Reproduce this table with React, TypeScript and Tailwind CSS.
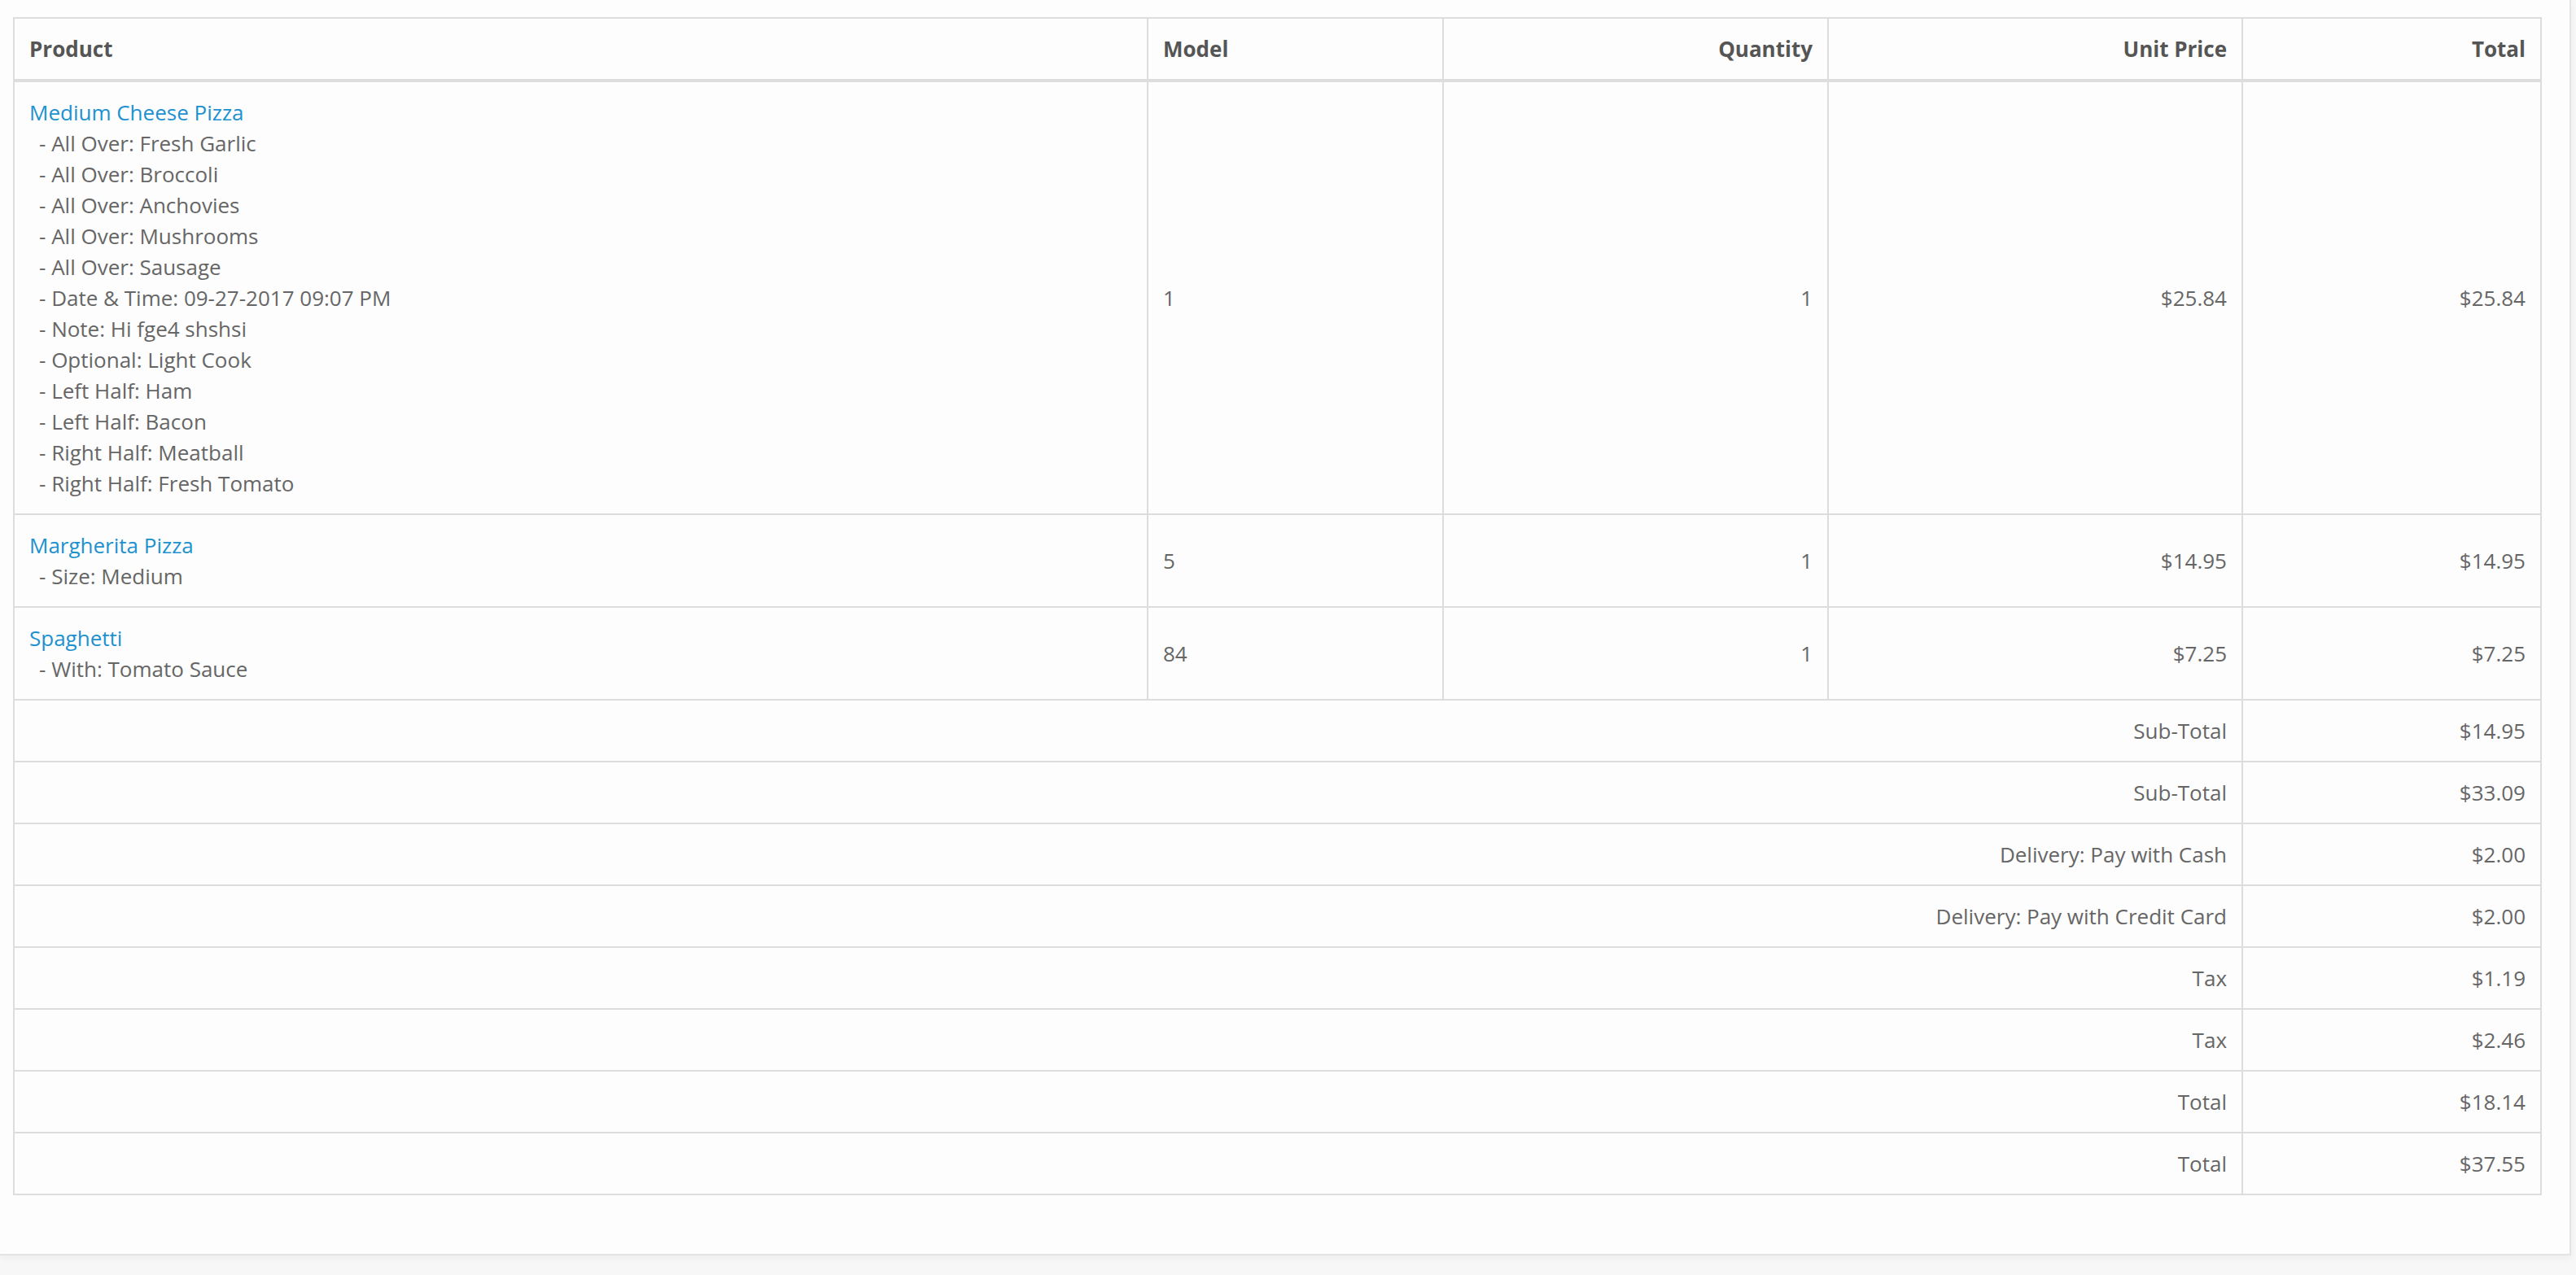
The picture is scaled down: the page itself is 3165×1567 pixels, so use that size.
import React from 'react';

interface OrderLine {
  name: string;
  options: string[];
  model: string;
  quantity: number;
  price: string;
  total: string;
}

const LINES: OrderLine[] = [
  {
    name: 'Medium Cheese Pizza',
    options: [
      'All Over: Fresh Garlic',
      'All Over: Broccoli',
      'All Over: Anchovies',
      'All Over: Mushrooms',
      'All Over: Sausage',
      'Date & Time: 09-27-2017 09:07 PM',
      'Note: Hi fge4 shshsi',
      'Optional: Light Cook',
      'Left Half: Ham',
      'Left Half: Bacon',
      'Right Half: Meatball',
      'Right Half: Fresh Tomato',
    ],
    model: '1',
    quantity: 1,
    price: '$25.84',
    total: '$25.84',
  },
  {
    name: 'Margherita Pizza',
    options: ['Size: Medium'],
    model: '5',
    quantity: 1,
    price: '$14.95',
    total: '$14.95',
  },
  {
    name: 'Spaghetti',
    options: ['With: Tomato Sauce'],
    model: '84',
    quantity: 1,
    price: '$7.25',
    total: '$7.25',
  },
];

const TOTALS: [string, string][] = [
  ['Sub-Total', '$14.95'],
  ['Sub-Total', '$33.09'],
  ['Delivery: Pay with Cash', '$2.00'],
  ['Delivery: Pay with Credit Card', '$2.00'],
  ['Tax', '$1.19'],
  ['Tax', '$2.46'],
  ['Total', '$18.14'],
  ['Total', '$37.55'],
];

const cell = 'border-2 border-[#dddddd] px-[18px] py-[18px] align-middle';
const head = 'border-2 border-b-[4px] border-[#dddddd] px-[18px] py-[18px] align-middle font-bold text-[#555555]';

export default function App() {
  return (
    <div className="min-h-screen bg-[#f7f7f7] font-['Open_Sans',sans-serif] text-[26px] leading-[38px] text-[#666666]">
      <div className="w-[3159px] border-r-2 border-b-2 border-[#e4e4e4] bg-[#fdfdfd] pt-[21px] pb-[72px] pl-[16px] shadow-[0_4px_8px_rgba(0,0,0,0.04)]">
        <table className="w-[3105px] table-fixed border-collapse">
          <colgroup>
            <col className="w-[1393px]" />
            <col className="w-[363px]" />
            <col className="w-[473px]" />
            <col className="w-[509px]" />
            <col className="w-[367px]" />
          </colgroup>
          <thead>
            <tr>
              <td className={`${head} text-left`}>Product</td>
              <td className={`${head} text-left`}>Model</td>
              <td className={`${head} text-right`}>Quantity</td>
              <td className={`${head} text-right`}>Unit Price</td>
              <td className={`${head} text-right`}>Total</td>
            </tr>
          </thead>
          <tbody>
            {LINES.map((l) => (
              <tr key={l.name}>
                <td className={`${cell} text-left`}>
                  <a className="text-[#1e91cf]">{l.name}</a>
                  {l.options.map((o) => (
                    <div key={o} className="pl-[12px]">
                      - {o}
                    </div>
                  ))}
                </td>
                <td className={`${cell} text-left`}>{l.model}</td>
                <td className={`${cell} text-right`}>{l.quantity}</td>
                <td className={`${cell} text-right`}>{l.price}</td>
                <td className={`${cell} text-right`}>{l.total}</td>
              </tr>
            ))}
            {TOTALS.map(([label, value], i) => (
              <tr key={i}>
                <td colSpan={4} className={`${cell} text-right`}>
                  {label}
                </td>
                <td className={`${cell} text-right`}>{value}</td>
              </tr>
            ))}
          </tbody>
        </table>
      </div>
    </div>
  );
}
